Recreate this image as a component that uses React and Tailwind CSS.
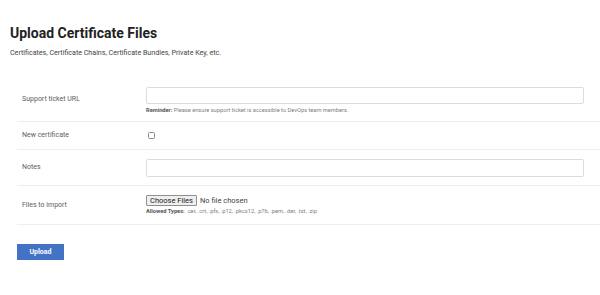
export default function App() {
  const rows = 'flex items-center border-b border-[#eeeeee]';
  const label = 'w-[129px] shrink-0 pl-[5px] text-[7px] text-[#606060]';
  return (
    <div className="h-[295px] w-[600px] bg-white font-['Roboto',sans-serif]">
      <div className="pl-[10px] pt-[24px]">
        <h1 className="text-[14px] font-bold leading-[18px] text-[#222]">Upload Certificate Files</h1>
        <p className="mt-[6px] text-[7.1px] leading-[10px] text-[#444]">
          Certificates, Certificate Chains, Certificate Bundles, Private Key, etc.
        </p>
      </div>

      <form className="ml-[17px] mt-[20px]">
        <div className={`${rows} h-[44px]`}>
          <label className={label}>Support ticket URL</label>
          <div className="flex-1 pr-[16px] pt-[2px]">
            <input className="block h-[17px] w-full rounded-[2px] border border-[#dcdcdc] bg-white" />
            <p className="mt-[3px] text-[5.7px] leading-[7px] text-[#808080]">
              <span className="font-bold text-[#555]">Reminder:</span> Please ensure support ticket is accessible to DevOps team members.
            </p>
          </div>
        </div>

        <div className={`${rows} h-[28px]`}>
          <label className={label}>New certificate</label>
          <div className="flex-1 pl-[2px]">
            <span className="block h-[7px] w-[7px] rounded-[1.5px] border border-[#8a8a8a] bg-white" />
          </div>
        </div>

        <div className={`${rows} h-[36px]`}>
          <label className={label}>Notes</label>
          <div className="flex-1 pr-[16px]">
            <input className="block h-[18px] w-full rounded-[2px] border border-[#dcdcdc] bg-white" />
          </div>
        </div>

        <div className={`${rows} h-[39px]`}>
          <label className={label}>Files to import</label>
          <div className="flex-1">
            <div className="flex items-center gap-[3px]">
              <span className="flex h-[11px] items-center rounded-[1px] border border-[#8f8f8f] bg-[#efefef] px-[3px] text-[7.5px] text-[#222]">
                Choose Files
              </span>
              <span className="text-[7.5px] text-[#444]">No file chosen</span>
            </div>
            <p className="mt-[2px] text-[5.7px] leading-[7px] text-[#808080]">
              <span className="font-bold text-[#555]">Allowed Types:</span> .cer, .crt, .pfx, .p12, .pkcs12, .p7b, .pem, .der, .txt, .zip
            </p>
          </div>
        </div>

        <button type="button" className="mt-[19px] flex h-[16px] w-[47px] items-center justify-center bg-[#4472c4] text-[7px] font-bold text-white">
          Upload
        </button>
      </form>
    </div>
  );
}
